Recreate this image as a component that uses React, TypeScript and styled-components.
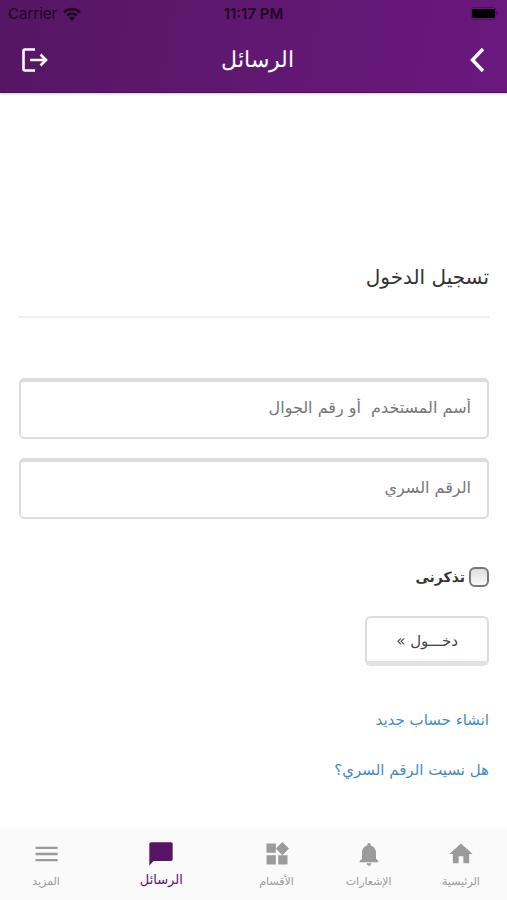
import React from "react";
import styled, { createGlobalStyle, css } from "styled-components";

const arabic = `"DejaVu Sans", sans-serif`;

const GlobalStyle = createGlobalStyle`
  *, *::before, *::after { box-sizing: border-box; }
  body { margin: 0; background: #fff; font-family: ${arabic}; }
`;

const Screen = styled.div`
  display: flex;
  flex-direction: column;
  min-height: 100vh;
  background: #fff;
`;

const Header = styled.header`
  color: #fff;
  background: linear-gradient(100deg, #551663 0%, #5f186f 45%, #6a187e 100%);
  border-bottom: 1px solid #4b1060;
  box-shadow: 0 1px 2px rgba(60, 10, 80, 0.25);
`;

const StatusBar = styled.div`
  display: grid;
  grid-template-columns: 1fr auto 1fr;
  align-items: center;
  height: 28px;
  padding: 0 8px;
  color: #1c0624;
  font: 15px/28px Inter, sans-serif;
`;

const Carrier = styled.span`
  display: flex;
  align-items: center;
  gap: 6px;
`;

const Clock = styled.span`
  font-weight: 600;
`;

const Battery = styled.svg`
  justify-self: end;
`;

const TitleBar = styled.div`
  display: grid;
  grid-template-columns: 1fr auto 1fr;
  align-items: center;
  height: 64px;
  padding: 0 16px;
`;

const Title = styled.h1`
  margin: 0;
  padding-left: 8px;
  font-size: 22px;
  font-weight: 200;
  line-height: 32px;
`;

const IconButton = styled.button<{ $end?: boolean }>`
  display: flex;
  justify-self: ${(p) => (p.$end ? "end" : "start")};
  padding: 0;
  border: 0;
  background: none;
  color: inherit;
  cursor: pointer;
`;

const Main = styled.main`
  flex: 1;
  padding: 160px 18px 0 19px;
`;

const Heading = styled.h2`
  margin: 0 0 40px;
  padding: 9px 0 24px;
  border-bottom: 2px solid #eee;
  color: #333;
  font-size: 20px;
  font-weight: 400;
  line-height: 30px;
`;

const Form = styled.form`
  display: flex;
  flex-direction: column;
  align-items: flex-start;
  padding-top: 20px;
`;

const Field = styled.input`
  width: 100%;
  height: 61px;
  margin-bottom: 19px;
  padding: 0 16px 4px;
  border: 2px solid #ddd;
  border-top-width: 4px;
  border-radius: 5px;
  background: #fff;
  color: #333;
  font: 16px ${arabic};
  &::placeholder { color: #777; opacity: 1; }
`;

const Remember = styled.label`
  display: flex;
  align-items: center;
  gap: 4px;
  height: 24px;
  margin: 27px 0;
  color: #333;
  font-size: 14px;
  font-weight: 700;
`;

const Checkbox = styled.input`
  appearance: none;
  width: 20px;
  height: 20px;
  margin: 0;
  border: 2px solid #777;
  border-radius: 6px;
  background: linear-gradient(#ddd, #fafafa);
  &:checked { background: #5b1568; }
`;

const Submit = styled.button`
  height: 50px;
  padding: 2px 29px 0;
  border: 2px solid #ddd;
  border-bottom: 5px solid #e2e2e2;
  border-radius: 6px;
  background: #fff;
  color: #444;
  font: 15px ${arabic};
  cursor: pointer;
`;

const Links = styled.nav`
  display: flex;
  flex-direction: column;
  align-items: flex-start;
  gap: 22px;
  padding-top: 40px;
`;

const TextLink = styled.a`
  color: #428bca;
  font-size: 15px;
  line-height: 28px;
  text-decoration: none;
`;

const TabBar = styled.nav`
  display: flex;
  height: 72px;
  background: #fafafa;
`;

const Tab = styled.a<{ $active?: boolean }>`
  display: flex;
  flex: 1 1 0;
  flex-direction: column;
  align-items: center;
  gap: 4px;
  padding-top: 12px;
  color: #9b9b9b;
  font-size: 11px;
  line-height: 20px;
  text-decoration: none;
  white-space: nowrap;
  ${(p) =>
    p.$active &&
    css`
      flex-grow: 1.5;
      gap: 2px;
      color: #581565;
      font-size: 13px;
    `}
`;

const tabs = [
  { label: "الرئيسية", icon: "M10 20v-6h4v6h5v-8h3L12 3 2 12h3v8z" },
  {
    label: "الإشعارات",
    icon: "M12 22c1.1 0 2-.9 2-2h-4c0 1.1.89 2 2 2zm6-6v-5c0-3.07-1.64-5.64-4.5-6.32V4c0-.83-.67-1.5-1.5-1.5s-1.5.67-1.5 1.5v.68C7.63 5.36 6 7.92 6 11v5l-2 2v1h16v-1l-2-2z",
  },
  {
    label: "الأقسام",
    icon: "M13 13v8h8v-8h-8zM3 21h8v-8H3v8zM3 3v8h8V3H3zm13.66-1.31L11 7.34 16.66 13l5.66-5.66-5.66-5.65z",
  },
  {
    label: "الرسائل",
    active: true,
    icon: "M20.5 2h-17C2.6 2 2 2.6 2 3.5V22l3.5-4h15c.9 0 1.5-.6 1.5-1.5v-13c0-.9-.6-1.5-1.5-1.5z",
  },
  { label: "المزيد", icon: "M3 18.2h19v-2H3v2zm0-5.200h19v-2H3v2zm0-7.200v2h19v-2H3z" },
];

export default function App() {
  return (
    <Screen dir="rtl" lang="ar">
      <GlobalStyle />
      <Header dir="ltr">
        <StatusBar>
          <Carrier>
            Carrier
            <svg width="18" height="14" viewBox="0 0 18 14" fill="none" stroke="currentColor" strokeWidth="2.6">
              <path d="M1 5.2C5.6.9 12.4.9 17 5.2" />
              <path d="M4 8.5C7 5.9 11 5.9 14 8.5" />
              <path d="M9 14 5.9 10.7Q9 8.3 12.1 10.7z" fill="currentColor" stroke="none" />
            </svg>
          </Carrier>
          <Clock>11:17 PM</Clock>
          <Battery width="29" height="15" viewBox="0 0 29 15">
            <rect x="1" y="0.5" width="25" height="12" rx="3" fill="none" stroke="#4a1258" />
            <rect x="2" y="2" width="23" height="9" rx="1.5" fill="#000" />
            <path d="M27 4.5q2 2 0 4z" fill="#3d0e4a" />
          </Battery>
        </StatusBar>
        <TitleBar>
          <IconButton type="button" aria-label="تسجيل الخروج">
            <svg width="36" height="30" viewBox="0 0 36 30" fill="none" stroke="#fff" strokeWidth="2.6">
              <path d="M19 4.5H9q-1.500 0-1.500 1.500v18q0 1.500 1.500 1.500h10" />
              <path d="M14 15h16M24.500 9.500l5.500 5.500-5.500 5.500" />
            </svg>
          </IconButton>
          <Title dir="rtl">الرسائل</Title>
          <IconButton type="button" aria-label="رجوع" $end>
            <svg width="30" height="30" viewBox="0 0 30 30" fill="none" stroke="#fff" strokeWidth="3.4">
              <path d="M22 4 11.5 15 22 26" />
            </svg>
          </IconButton>
        </TitleBar>
      </Header>
      <Main>
        <Heading>تسجيل الدخول</Heading>
        <Form onSubmit={(e) => e.preventDefault()}>
          <Field type="text" aria-label="أسم المستخدم أو رقم الجوال" placeholder={"أسم المستخدم \u00a0أو رقم الجوال"} />
          <Field type="password" aria-label="الرقم السري" placeholder="الرقم السري" />
          <Remember>
            <Checkbox type="checkbox" />
            تذكرنى
          </Remember>
          <Submit type="submit">دخـــول »</Submit>
        </Form>
        <Links>
          <TextLink href="#register">انشاء حساب جديد</TextLink>
          <TextLink href="#forgot">هل نسيت الرقم السري؟</TextLink>
        </Links>
      </Main>
      <TabBar>
        {tabs.map((t) => (
          <Tab key={t.label} href="#" $active={t.active} aria-current={t.active ? "page" : undefined}>
            <svg width="28" height="28" viewBox="0 0 24 24" fill="currentColor">
              <path d={t.icon} />
            </svg>
            {t.label}
          </Tab>
        ))}
      </TabBar>
    </Screen>
  );
}
